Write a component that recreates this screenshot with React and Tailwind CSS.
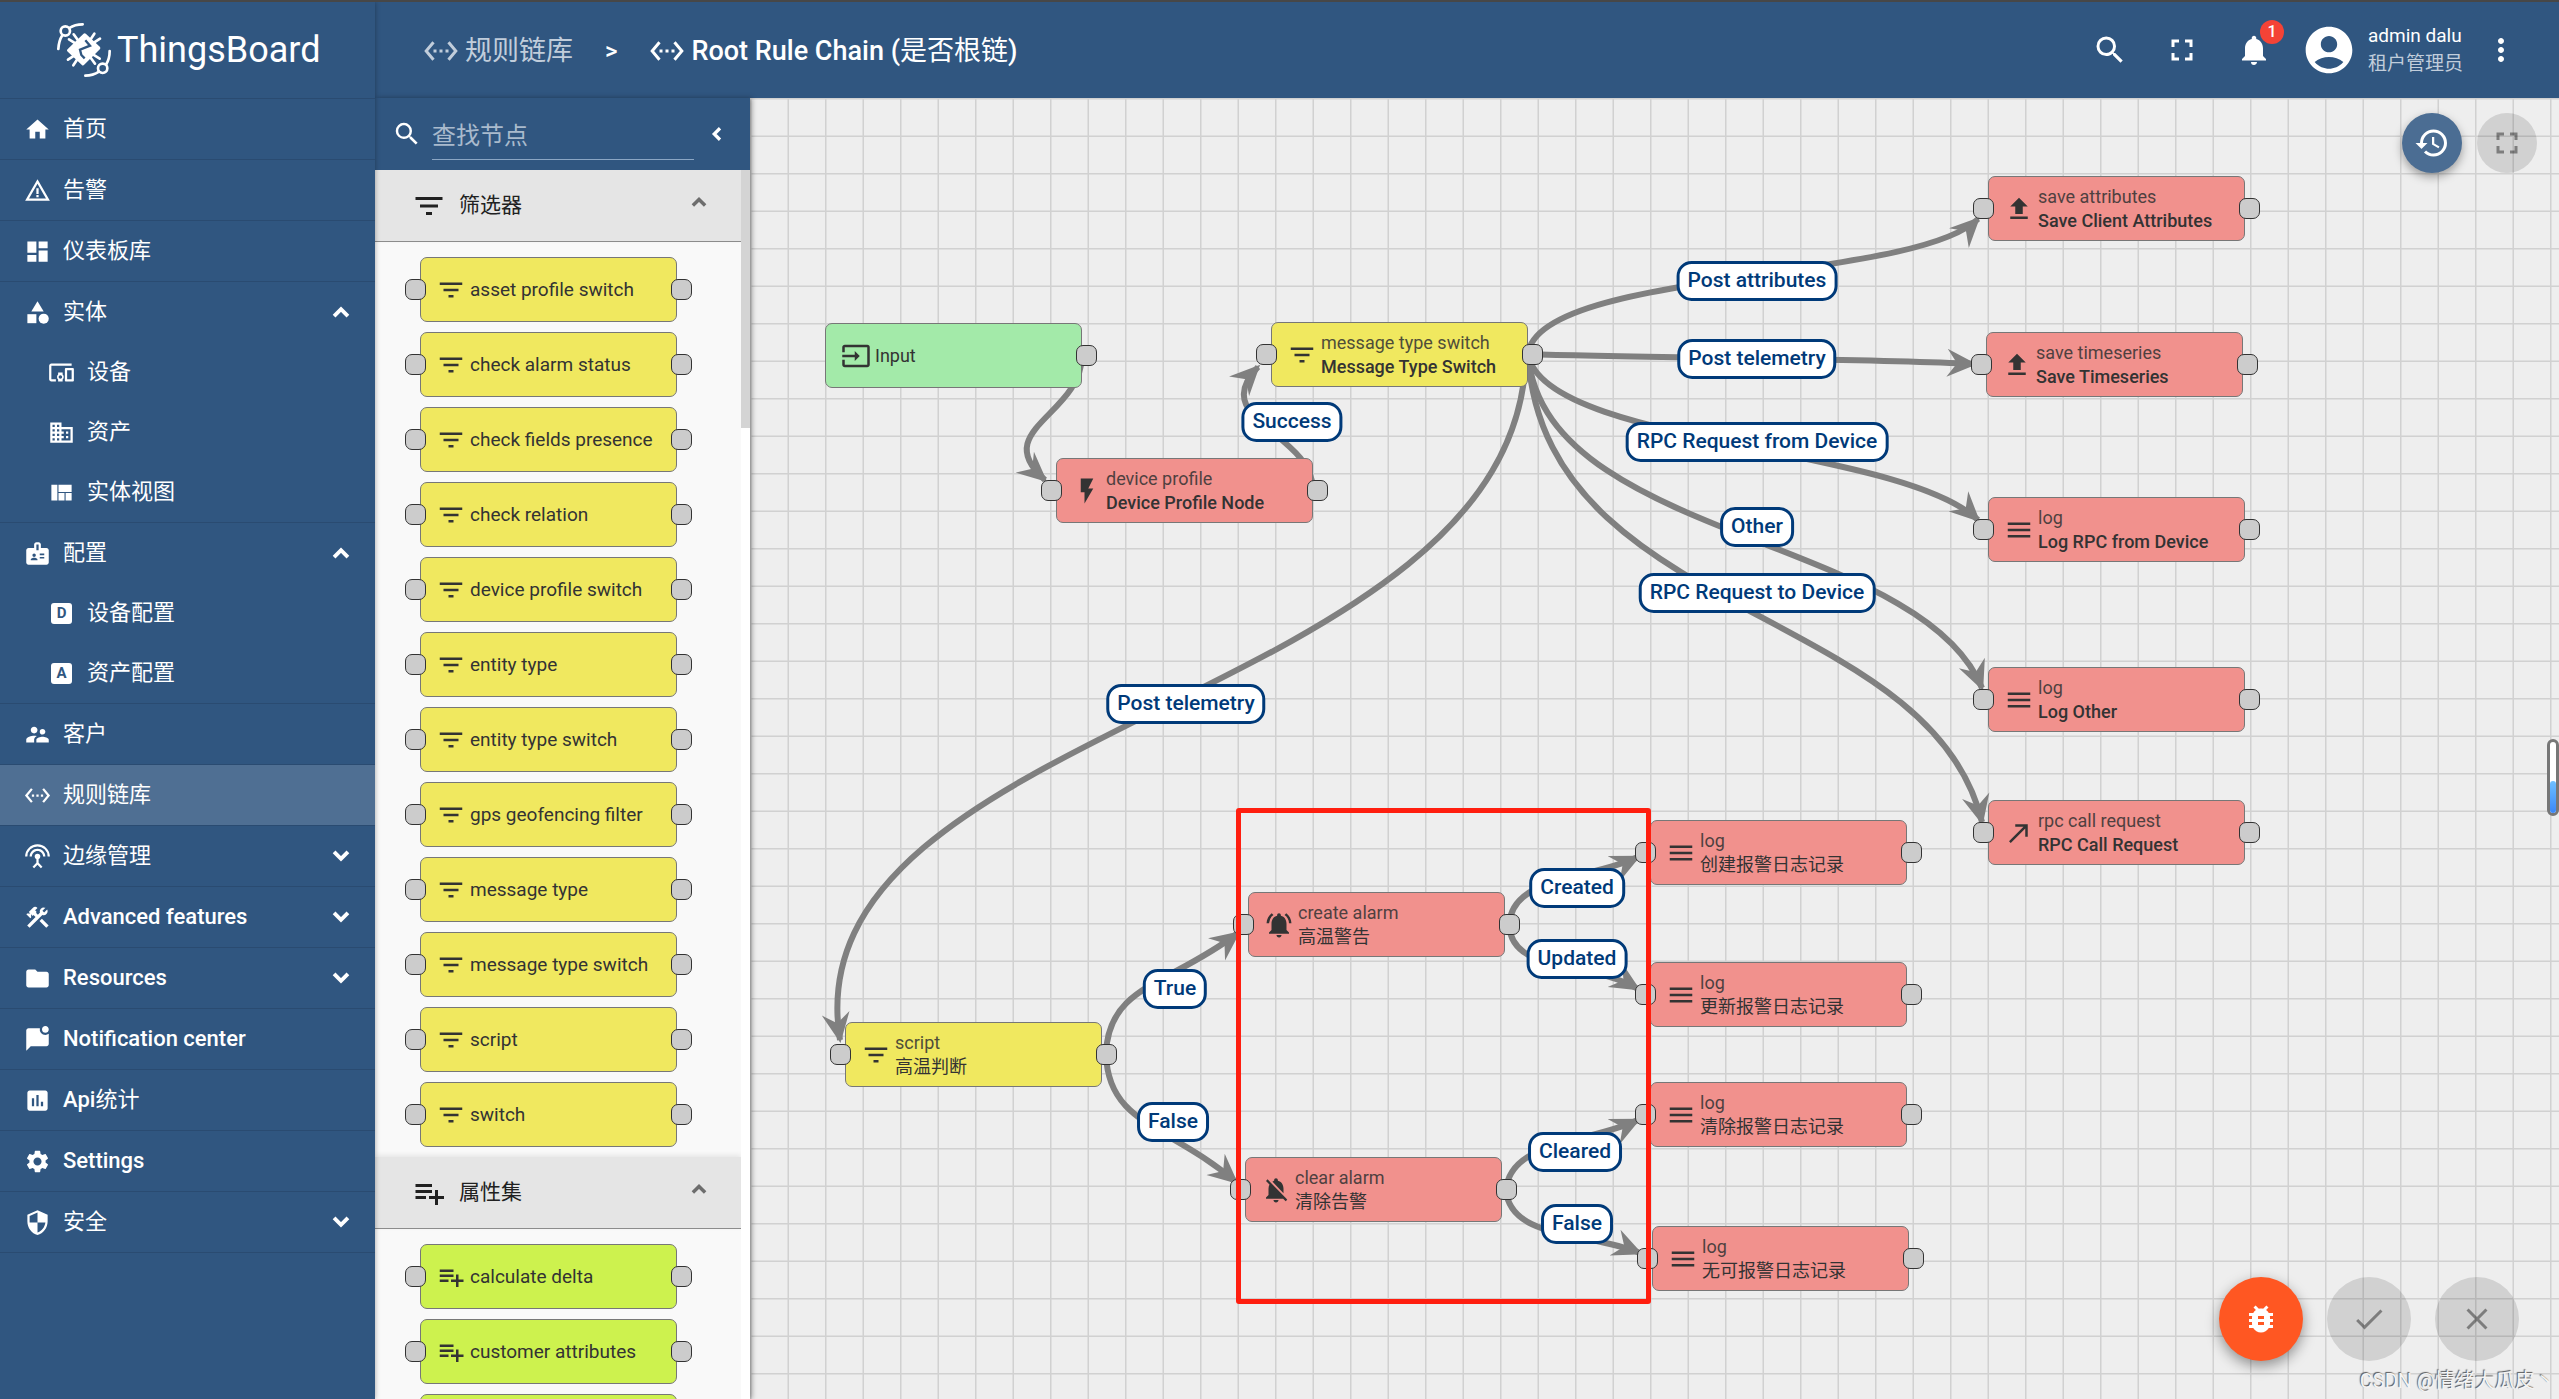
import React, { useState } from "react";
import {
  MdAccountCircle,
  MdBadge,
  MdBugReport,
  MdCallMade,
  MdCategory,
  MdClose,
  MdConstruction,
  MdDashboard,
  MdDevicesOther,
  MdDomain,
  MdDone,
  MdFileUpload,
  MdFilterList,
  MdFlashOn,
  MdFolder,
  MdFullscreen,
  MdHistory,
  MdHome,
  MdInput,
  MdInsertChart,
  MdMarkChatUnread,
  MdMenu,
  MdMoreVert,
  MdNotifications,
  MdNotificationsActive,
  MdNotificationsOff,
  MdPlaylistAdd,
  MdSearch,
  MdSecurity,
  MdSettings,
  MdSettingsEthernet,
  MdSettingsInputAntenna,
  MdSupervisorAccount,
  MdViewQuilt,
  MdWarningAmber,
} from "react-icons/md";

const LetterBox = ({ letter }) => (
  <span className="flex size-[27px] items-center justify-center">
    <span className="flex size-[21px] items-center justify-center rounded-[3px] bg-white text-[15px] leading-none font-bold text-[#305680]">
      {letter}
    </span>
  </span>
);

const menu = [
  { name: "首页", icon: <MdHome /> },
  { name: "告警", icon: <MdWarningAmber /> },
  { name: "仪表板库", icon: <MdDashboard /> },
  {
    name: "实体",
    icon: <MdCategory />,
    open: true,
    pages: [
      { name: "设备", icon: <MdDevicesOther /> },
      { name: "资产", icon: <MdDomain /> },
      { name: "实体视图", icon: <MdViewQuilt /> },
    ],
  },
  {
    name: "配置",
    icon: <MdBadge />,
    open: true,
    pages: [
      { name: "设备配置", icon: <LetterBox letter="D" /> },
      { name: "资产配置", icon: <LetterBox letter="A" /> },
    ],
  },
  { name: "客户", icon: <MdSupervisorAccount /> },
  { name: "规则链库", icon: <MdSettingsEthernet />, active: true },
  { name: "边缘管理", icon: <MdSettingsInputAntenna />, pages: [] },
  { name: "Advanced features", icon: <MdConstruction />, pages: [] },
  { name: "Resources", icon: <MdFolder />, pages: [] },
  { name: "Notification center", icon: <MdMarkChatUnread /> },
  { name: "Api统计", icon: <MdInsertChart /> },
  { name: "Settings", icon: <MdSettings /> },
  { name: "安全", icon: <MdSecurity />, pages: [] },
];

const library = [
  {
    title: "筛选器",
    icon: <MdFilterList />,
    color: "bg-[#f0e85f]",
    items: [
      "asset profile switch",
      "check alarm status",
      "check fields presence",
      "check relation",
      "device profile switch",
      "entity type",
      "entity type switch",
      "gps geofencing filter",
      "message type",
      "message type switch",
      "script",
      "switch",
    ],
  },
  {
    title: "属性集",
    icon: <MdPlaylistAdd />,
    color: "bg-[#cdf24e]",
    items: ["calculate delta", "customer attributes", ""],
  },
];

// x / y are canvas coordinates of the top left corner
const nodes = [
  { x: 75, y: 225, type: "Input", icon: <MdInput />, color: "bg-[#a3eaa9]", input: true },
  { x: 306, y: 360, type: "device profile", name: "Device Profile Node", icon: <MdFlashOn /> },
  { x: 521, y: 224, type: "message type switch", name: "Message Type Switch", icon: <MdFilterList />, color: "bg-[#f0e85f]" },
  { x: 1238, y: 78, type: "save attributes", name: "Save Client Attributes", icon: <MdFileUpload /> },
  { x: 1236, y: 234, type: "save timeseries", name: "Save Timeseries", icon: <MdFileUpload /> },
  { x: 1238, y: 399, type: "log", name: "Log RPC from Device", icon: <MdMenu /> },
  { x: 1238, y: 569, type: "log", name: "Log Other", icon: <MdMenu /> },
  { x: 1238, y: 702, type: "rpc call request", name: "RPC Call Request", icon: <MdCallMade /> },
  { x: 95, y: 924, type: "script", name: "高温判断", icon: <MdFilterList />, color: "bg-[#f0e85f]" },
  { x: 498, y: 794, type: "create alarm", name: "高温警告", icon: <MdNotificationsActive /> },
  { x: 495, y: 1059, type: "clear alarm", name: "清除告警", icon: <MdNotificationsOff /> },
  { x: 900, y: 722, type: "log", name: "创建报警日志记录", icon: <MdMenu /> },
  { x: 900, y: 864, type: "log", name: "更新报警日志记录", icon: <MdMenu /> },
  { x: 900, y: 984, type: "log", name: "清除报警日志记录", icon: <MdMenu /> },
  { x: 902, y: 1128, type: "log", name: "无可报警日志记录", icon: <MdMenu /> },
];

const edges = [
  "M332 257 C332 317 238 332 295 382",
  "M563 392 C563 335 456 322 508 269",
  "M778 256 C788 172 1165 184 1228 121",
  "M778 256 C880 260 1100 260 1224 266",
  "M778 256 C793 347 1150 347 1228 422",
  "M778 256 C793 442 1170 437 1232 590",
  "M778 256 C793 522 1180 507 1232 724",
  "M776 256 C768 607 38 622 90 942",
  "M356 956 C358 887 420 887 488 835",
  "M356 956 C358 1027 420 1027 486 1084",
  "M759 827 C762 777 840 782 888 759",
  "M759 827 C762 877 840 862 888 891",
  "M756 1092 C760 1042 840 1045 888 1022",
  "M756 1092 C760 1142 840 1134 890 1155",
];

const labels = [
  { x: 542, y: 324, text: "Success" },
  { x: 1007, y: 183, text: "Post attributes" },
  { x: 1007, y: 261, text: "Post telemetry" },
  { x: 1007, y: 344, text: "RPC Request from Device" },
  { x: 1007, y: 429, text: "Other" },
  { x: 1007, y: 495, text: "RPC Request to Device" },
  { x: 436, y: 606, text: "Post telemetry" },
  { x: 425, y: 891, text: "True" },
  { x: 423, y: 1024, text: "False" },
  { x: 827, y: 790, text: "Created" },
  { x: 827, y: 861, text: "Updated" },
  { x: 825, y: 1054, text: "Cleared" },
  { x: 827, y: 1126, text: "False" },
];

const isChinese = (text) => /[\u4e00-\u9fa5]/.test(text);

// chinese parts use a lighter weight than the latin ones next to them
const Label = ({ text }) =>
  text.split(/([\u4e00-\u9fa5]+)/).map((part, i) =>
    isChinese(part) ? (
      <span key={i} className="font-normal">
        {part}
      </span>
    ) : (
      part
    )
  );

const arrows = {
  up: "M7.4 14.7L12 10.1L16.6 14.7",
  down: "M7.4 9.3L12 13.9L16.6 9.3",
  left: "M14.4 7.4L9.8 12L14.4 16.6",
};

const Chevron = ({ to, className }) => (
  <svg viewBox="0 0 24 24" className={className} fill="none" stroke="currentColor" strokeWidth="2.6">
    <path d={arrows[to]} />
  </svg>
);

function Logo() {
  return (
    <a href="#home" className="flex h-24 shrink-0 items-center gap-1 pl-[55px] text-white">
      <svg viewBox="15 15 174 180" className="h-[60px] w-[58px]" fill="none" stroke="currentColor" strokeWidth="8" strokeLinecap="round">
        <circle cx="46" cy="48" r="14" />
        <path d="M25 102C26 85 30 72 37 61M58 39C70 31 84 28 98 28" />
        <circle cx="158" cy="160" r="14" />
        <path d="M179 108C179 125 175 138 168 149M147 170C135 178 120 182 106 182" />
        <path d="M71 58L135 146M57 73L149 131M133 56L70 151M150 71L54 134" strokeWidth="8" />
        <path d="M104 60L146 99L99 146L56 106Z" fill="currentColor" strokeLinejoin="round" strokeWidth="10" />
        <path d="M106 76L120 92L90 104L94 120L104 130" stroke="#305680" strokeWidth="7" strokeLinecap="butt" />
      </svg>
      <span className="text-4xl">ThingsBoard</span>
    </a>
  );
}

function MenuItem({ item }) {
  const [open, setOpen] = useState(!!item.open);

  if (!item.pages) {
    return (
      <li className="border-b border-[#2a4b71]">
        <a
          href="#page"
          className={`flex h-[60px] items-center gap-3 pl-6 ${item.active ? "bg-[#4f6f93]" : ""}`}
        >
          <span className="text-[27px]">{item.icon}</span>
          <span>
            <Label text={item.name} />
          </span>
        </a>
      </li>
    );
  }

  return (
    <li className="border-b border-[#2a4b71]">
      <button onClick={() => setOpen(!open)} className="flex h-[60px] w-full items-center gap-3 pr-4 pl-6">
        <span className="text-[27px]">{item.icon}</span>
        <span>
          <Label text={item.name} />
        </span>
        <Chevron to={open ? "up" : "down"} className="ml-auto size-9" />
      </button>
      {open && (
        <ul>
          {item.pages.map((page) => (
            <li key={page.name}>
              <a href="#page" className="flex h-[60px] items-center gap-3 pl-12">
                <span className="text-[27px]">{page.icon}</span>
                <span>
                  <Label text={page.name} />
                </span>
              </a>
            </li>
          ))}
        </ul>
      )}
    </li>
  );
}

function Connector({ side }) {
  return (
    <span
      className={`absolute top-[21px] size-[21px] rounded-[7px] border border-[#333] bg-[#ccc] ${
        side === "left" ? "-left-4" : "-right-4"
      }`}
    />
  );
}

function RuleNode({ type, name, icon, color = "bg-[#f1918d]", input, size = "text-lg" }) {
  return (
    <div className={`relative flex h-[65px] w-[257px] items-center gap-1 rounded-[7px] border border-[#777] pl-[15px] text-[#333] ${color}`}>
      <span className="text-3xl">{icon}</span>
      <div className={`whitespace-nowrap ${size}`}>
        <div className={`leading-6 ${name ? "opacity-85" : ""}`}>{type}</div>
        {name && (
          <div className="leading-6 font-medium">
            <Label text={name} />
          </div>
        )}
      </div>
      {!input && <Connector side="left" />}
      <Connector side="right" />
    </div>
  );
}

function NodeLibrary() {
  return (
    <section className="relative z-10 flex w-[375px] shrink-0 flex-col bg-[#f9f9f9] shadow-[2px_0_5px_rgba(0,0,0,0.35)]">
      <div className="flex h-[72px] shrink-0 items-center bg-[#305680] pr-[18px] pl-[17px] text-white">
        <label htmlFor="node-search" className="text-3xl">
          <MdSearch />
        </label>
        <input
          id="node-search"
          placeholder="查找节点"
          className="ml-[10px] h-[52px] w-0 flex-1 border-b border-[#8ba6c4] bg-transparent pt-1 text-2xl outline-none placeholder:text-[#a9bacd]"
        />
        <button aria-label="collapse" className="ml-2">
          <Chevron to="left" className="size-[30px]" />
        </button>
      </div>
      <div className="flex min-h-0 flex-1">
        <div className="min-w-0 flex-1 overflow-hidden">
          {library.map((group) => (
            <div key={group.title}>
              <button className="flex h-[72px] w-full items-center border-b border-[#8c8c8c] bg-[#e5e5e5] pr-[26px] pl-9 text-[21px] text-[#212121] shadow-[0_-2px_5px_rgba(0,0,0,0.08)]">
                <span className="text-4xl">{group.icon}</span>
                <span className="ml-3">
                  <Label text={group.title} />
                </span>
                <Chevron to="up" className="mb-2 ml-auto size-8 text-[#6d6d6d]" />
              </button>
              <div className="flex flex-col gap-[10px] pt-[15px] pb-[10px] pl-[45px]">
                {group.items.map((item) => (
                  <RuleNode key={item} type={item} icon={group.icon} color={group.color} size="text-[19px]" />
                ))}
              </div>
            </div>
          ))}
        </div>
        <div className="w-[9px] bg-white">
          <div className="h-[21%] bg-[#d4d4d4]" />
        </div>
      </div>
    </section>
  );
}

function Canvas() {
  return (
    <main className="relative min-w-0 flex-1 overflow-hidden bg-[#eee]">
      <svg className="absolute inset-0 size-full">
        <defs>
          <pattern id="grid" width="75" height="75" patternUnits="userSpaceOnUse">
            <path d="M0.75 0V75M38.25 0V75M0 0.75H75M0 38.25H75" stroke="#000" strokeOpacity="0.12" strokeWidth="1.5" />
          </pattern>
          <marker id="arrow" markerWidth="30" markerHeight="30" refX="27" refY="15" orient="auto" markerUnits="userSpaceOnUse">
            <path d="M0 1L30 15L0 29L10 15Z" fill="gray" />
          </marker>
        </defs>
        <rect width="100%" height="100%" fill="url(#grid)" />
        {edges.map((d) => (
          <path key={d} d={d} fill="none" stroke="gray" strokeWidth="6" markerEnd="url(#arrow)" />
        ))}
      </svg>

      {nodes.map((node) => (
        <div key={`${node.x}-${node.y}`} className="absolute" style={{ left: node.x, top: node.y }}>
          <RuleNode {...node} />
        </div>
      ))}

      {labels.map((label) => (
        <div
          key={`${label.x}-${label.y}`}
          className="absolute flex h-10 -translate-x-1/2 -translate-y-1/2 items-center rounded-[15px] border-3 border-[#003a79] bg-white px-2 text-[21px] font-medium whitespace-nowrap text-[#003a79]"
          style={{ left: label.x, top: label.y }}
        >
          {label.text}
        </div>
      ))}

      <div className="absolute top-[710px] left-[486px] h-[496px] w-[415px] rounded-[3px] border-5 border-[#ff1e0f]" />

      <div className="absolute top-[15px] right-[22px] flex gap-[15px] text-4xl">
        <button aria-label="version control" className="flex size-[60px] items-center justify-center rounded-full bg-[#4b6d93] text-white shadow-[0_4px_10px_rgba(0,0,0,0.35)]">
          <MdHistory />
        </button>
        <button aria-label="fullscreen" className="flex size-[60px] items-center justify-center rounded-full bg-black/12 text-black/40">
          <MdFullscreen />
        </button>
      </div>

      <div className="absolute right-10 bottom-[38px] flex gap-6 text-4xl">
        <button aria-label="debug" className="flex size-[84px] items-center justify-center rounded-full bg-[#ff5722] text-white shadow-[0_5px_14px_rgba(0,0,0,0.4)]">
          <MdBugReport />
        </button>
        <button aria-label="apply" className="flex size-[84px] items-center justify-center rounded-full bg-black/12 text-black/40">
          <MdDone />
        </button>
        <button aria-label="cancel" className="flex size-[84px] items-center justify-center rounded-full bg-black/12 text-black/40">
          <MdClose />
        </button>
      </div>

      <div className="absolute top-[641px] right-0 flex h-[77px] w-3 flex-col justify-end rounded-md border-3 border-[#777] bg-white">
        <div className="h-8 rounded-sm bg-linear-to-b from-[#6fc0ff] to-[#3b86f7]" />
      </div>
      <div className="absolute right-1 bottom-1 text-xl text-[#f4f4f4] [text-shadow:-1px_-1px_1px_#555]">
        CSDN @情绪大瓜皮丶
      </div>
    </main>
  );
}

function Toolbar() {
  return (
    <header className="flex h-24 shrink-0 items-center bg-[#305680] pr-10 pl-12 text-white">
      <nav className="flex items-center pt-[2px] text-[27px] font-medium">
        <a href="#rule-chains" className="flex items-center gap-[6px] text-[#c1cddb]">
          <MdSettingsEthernet className="text-4xl" />
          <span>
            <Label text="规则链库" />
          </span>
        </a>
        <span className="mx-8 text-2xl">&gt;</span>
        <a href="#root" className="flex items-center gap-[6px]">
          <MdSettingsEthernet className="text-4xl" />
          <span>
            <Label text="Root Rule Chain (是否根链)" />
          </span>
        </a>
      </nav>
      <div className="ml-auto flex items-center text-4xl">
        <button aria-label="search">
          <MdSearch />
        </button>
        <button aria-label="fullscreen" className="ml-9">
          <MdFullscreen />
        </button>
        <button aria-label="notifications" className="relative ml-9">
          <MdNotifications />
          <span className="absolute -top-3 -right-3 flex size-6 items-center justify-center rounded-full bg-[#f44336] text-base leading-none font-medium">
            1
          </span>
        </button>
        <MdAccountCircle className="ml-[29px] size-[56px]" />
        <div className="ml-[11px] text-[19px] leading-7">
          <div>admin dalu</div>
          <div className="text-[#c1cddb]">租户管理员</div>
        </div>
        <button aria-label="more" className="ml-5">
          <MdMoreVert />
        </button>
      </div>
    </header>
  );
}

export default function App() {
  return (
    <div className="flex h-screen flex-col overflow-hidden border-t-2 border-[#474747] font-[Roboto,'Noto_Sans_CJK_SC',sans-serif]">
      <div className="flex min-h-0 flex-1">
        <aside className="relative z-20 w-[375px] shrink-0 overflow-hidden bg-[#305680] text-[22px] leading-7 font-medium text-white shadow-[0_0_5px_rgba(0,0,0,0.35)]">
          <div className="border-b border-[#2a4b71] font-normal">
            <Logo />
          </div>
          <ul>
            {menu.map((item) => (
              <MenuItem key={item.name} item={item} />
            ))}
          </ul>
        </aside>
        <div className="flex min-w-0 flex-1 flex-col">
          <Toolbar />
          <div className="flex min-h-0 flex-1">
            <NodeLibrary />
            <Canvas />
          </div>
        </div>
      </div>
    </div>
  );
}
